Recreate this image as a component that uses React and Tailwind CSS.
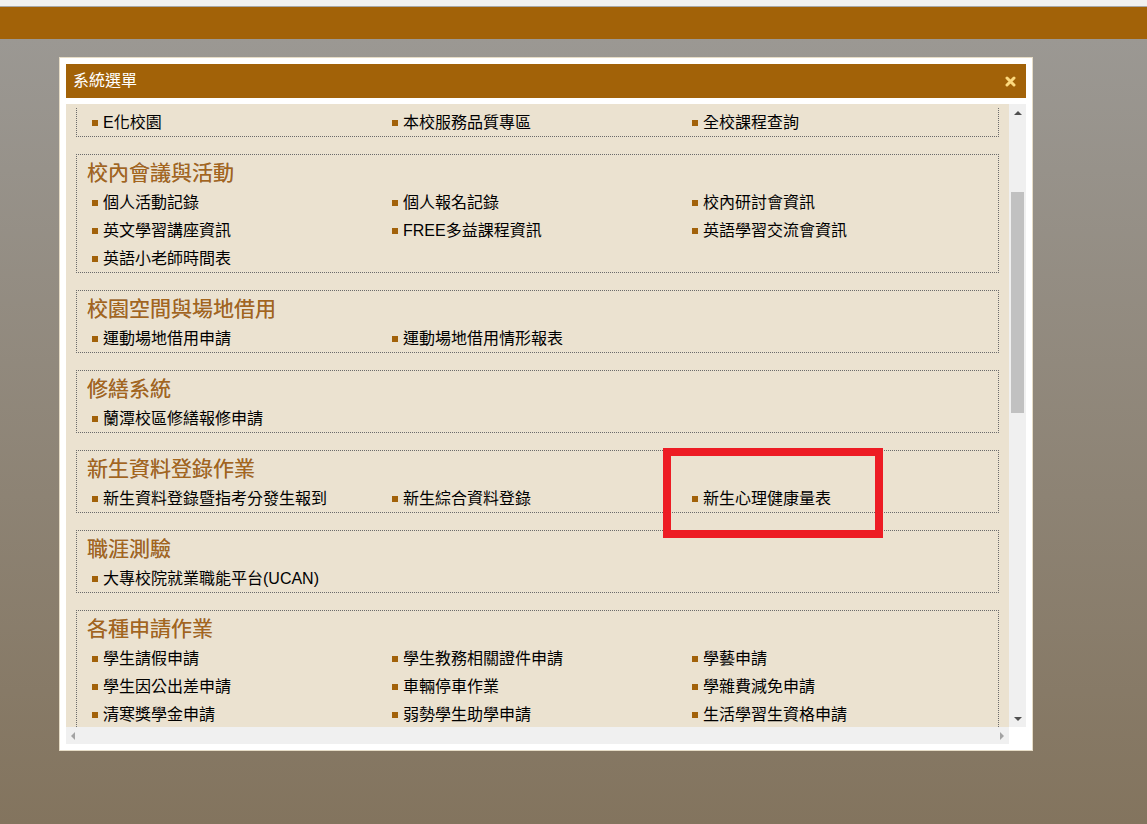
import React from 'react';

const font = { fontFamily: '"Liberation Sans", "Noto Sans CJK TC", sans-serif' };

const sections = [
  { title: null, items: ['E化校園', '本校服務品質專區', '全校課程查詢'] },
  {
    title: '校內會議與活動',
    items: ['個人活動記錄', '個人報名記錄', '校內研討會資訊', '英文學習講座資訊', 'FREE多益課程資訊', '英語學習交流會資訊', '英語小老師時間表']
  },
  { title: '校園空間與場地借用', items: ['運動場地借用申請', '運動場地借用情形報表'] },
  { title: '修繕系統', items: ['蘭潭校區修繕報修申請'] },
  { title: '新生資料登錄作業', items: ['新生資料登錄暨指考分發生報到', '新生綜合資料登錄', '新生心理健康量表'] },
  { title: '職涯測驗', items: ['大專校院就業職能平台(UCAN)'] },
  {
    title: '各種申請作業',
    items: ['學生請假申請', '學生教務相關證件申請', '學藝申請', '學生因公出差申請', '車輛停車作業', '學雜費減免申請', '清寒獎學金申請', '弱勢學生助學申請', '生活學習生資格申請']
  }
];

function Section({ title, items }) {
  return (
    <div
      className={`mb-[17px] border border-dotted border-[#6b6b6b] ${title ? '' : 'border-t-0'}`}
    >
      {title && (
        <div className="h-[33px] pl-[10px] pt-[1px] flex items-center text-[21px] leading-none text-[#a5651c] [text-shadow:0_0_0.5px_#8a7a6a]">
          {title}
        </div>
      )}
      <div className="grid grid-cols-[300px_300px_300px] pl-[15px]">
        {items.map((it) => (
          <div key={it} className="h-[28px] pt-[2px] flex items-center gap-[5px] text-[16px] leading-none text-black">
            <span className="w-[6px] h-[6px] bg-[#a2620a] shrink-0" />
            <span>{it}</span>
          </div>
        ))}
      </div>
    </div>
  );
}

export default function App() {
  return (
    <div className="relative w-full h-[824px] overflow-hidden flex flex-col" style={font}>
      <div className="h-[6px] bg-[#f1f1f1]" />
      <div className="h-px bg-[#a8a8a8]" />
      <div className="h-[32px] bg-[#a26208]" />
      <div className="flex-1 bg-gradient-to-b from-[#9b9893] to-[#83745e] pt-[18px] pl-[59px]">
        {/* dialog */}
        <div className="w-[974px] h-[694px] bg-white border border-[#e6dcc6] p-[6px] flex flex-col">
          <div className="h-[34px] shrink-0 bg-[#a26208] flex items-center justify-between pl-[7px] pr-[10px]">
            <span className="text-white text-[16px] leading-none">系統選單</span>
            <svg width="11" height="11" viewBox="0 0 11 11">
              <path d="M2 2 L9 9 M9 2 L2 9" stroke="#fcd97e" strokeWidth="3" strokeLinecap="round" />
            </svg>
          </div>
          <div className="mt-[6px] flex-1 grid grid-cols-[943px_17px] grid-rows-[623px_17px]">
            <div className="overflow-hidden bg-[#ebe2d0] pl-[10px] pr-[10px] pt-[4px]">
              {sections.map((s, i) => (
                <Section key={i} title={s.title} items={s.items} />
              ))}
            </div>
            {/* vertical scrollbar */}
            <div className="bg-[#f0f0f0] flex flex-col items-center">
              <div className="h-[17px] flex items-center justify-center">
                <svg width="8" height="4" viewBox="0 0 8 4"><path d="M0 4 L4 0 L8 4 Z" fill="#505050" /></svg>
              </div>
              <div className="mt-[71px] w-[13px] h-[221px] bg-[#c1c1c1]" />
              <div className="flex-1" />
              <div className="h-[17px] flex items-center justify-center">
                <svg width="8" height="4" viewBox="0 0 8 4"><path d="M0 0 L4 4 L8 0 Z" fill="#505050" /></svg>
              </div>
            </div>
            {/* horizontal scrollbar */}
            <div className="bg-[#f0f0f0] flex items-center justify-between px-[5px]">
              <svg width="4" height="8" viewBox="0 0 4 8"><path d="M4 0 L0 4 L4 8 Z" fill="#a3a3a3" /></svg>
              <svg width="4" height="8" viewBox="0 0 4 8"><path d="M0 0 L4 4 L0 8 Z" fill="#a3a3a3" /></svg>
            </div>
            <div className="bg-white" />
          </div>
        </div>
      </div>
      {/* annotation */}
      <div className="absolute left-[663px] top-[448px] w-[220px] h-[90px] border-[8px] border-[#ed1c24]" />
    </div>
  );
}
